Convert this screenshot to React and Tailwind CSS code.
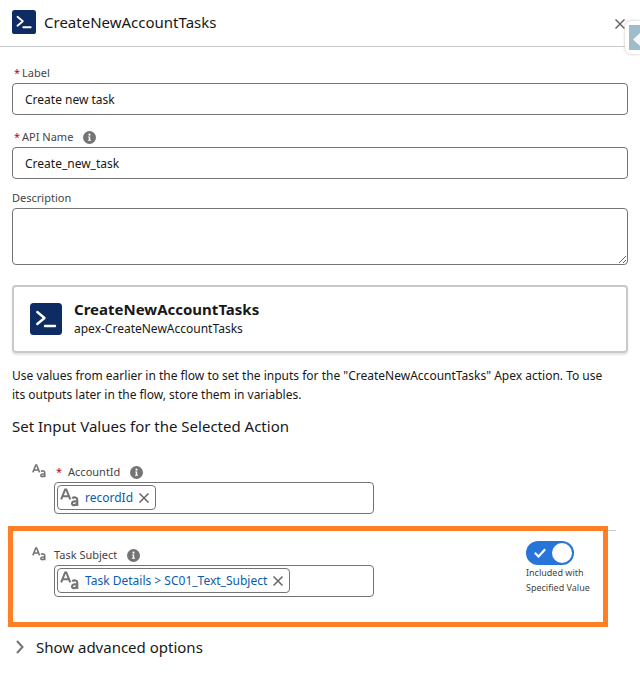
import { useState } from 'react';

function ApexIcon({ className }) {
  return (
    <svg viewBox="0 0 32 32" className={className} aria-hidden="true">
      <rect width="32" height="32" rx="3.500" fill="#0d2c63" />
      <path d="M7.300 9 14.500 15l-7.200 6" fill="none" stroke="#fff" strokeWidth="2.400" strokeLinecap="round" strokeLinejoin="round" />
      <path d="M15 23h10" fill="none" stroke="#fff" strokeWidth="2.400" strokeLinecap="round" />
    </svg>
  );
}

function InfoButton({ label }) {
  return (
    <button type="button" aria-label={label} className="shrink-0">
      <svg viewBox="0 0 13 13" className="size-[13px]" aria-hidden="true">
        <circle cx="6.500" cy="6.500" r="6.500" fill="#747474" />
        <circle cx="6.500" cy="3.700" r="1.100" fill="#fff" />
        <path d="M5.200 5.500h2v3.300h.8v1H5v-1h.8V6.400h-.6z" fill="#fff" />
      </svg>
    </button>
  );
}

function TextTypeIcon({ className }) {
  return (
    <svg viewBox="0 0 20 20" className={className} fill="none" stroke="#747474" strokeWidth="2.200" aria-hidden="true">
      <path d="M1.200 12 5.400 1.500h1.200L10.800 12M2.800 8.600h6.400" />
      <path d="M12.800 10.600c2-1.300 5.400-1 5.400 1.700V19M18.200 13.800c-3.400 0-5.600.5-5.600 2.500 0 2.600 4.500 2.200 5.600-.5" />
    </svg>
  );
}

function CloseIcon({ className }) {
  return (
    <svg viewBox="0 0 10 10" className={className} fill="none" stroke="#666" strokeWidth="1.500" aria-hidden="true">
      <path d="M.5.5l9 9M9.500.5l-9 9" />
    </svg>
  );
}

function Required() {
  return <span className="text-[#ba0517]">*</span>;
}

function Field({ id, label, info, value }) {
  return (
    <div>
      <div className="flex h-5 items-center gap-2.5">
        <label htmlFor={id} className="flex gap-0.5 pl-0.5 text-[#444]">
          <Required />
          {label}
        </label>
        {info && <InfoButton label={`${label} help`} />}
      </div>
      <input
        id={id}
        type="text"
        defaultValue={value}
        className="block h-8 w-full rounded border border-[#747474] px-3 text-xs text-[#181818]"
      />
    </div>
  );
}

function ResourceField({ id, label, required, value }) {
  const [resource, setResource] = useState(value);

  return (
    <div className="flex gap-2">
      <TextTypeIcon className="mt-0.5 size-3.5 shrink-0" />
      <div className="w-80">
        <div className="flex h-5 items-center gap-2.5">
          <label htmlFor={id} className="flex gap-1.5 text-[#444]">
            {required && <span className="pl-0.5"><Required /></span>}
            {label}
          </label>
          <InfoButton label={`${label} help`} />
        </div>
        <div className="flex h-8 items-start rounded border border-[#747474] px-0.5 pt-0.5">
          {resource && (
            <span className="flex h-[25px] shrink-0 items-center gap-1.5 rounded border border-[#747474] pl-0.5 pr-1.5 text-xs text-[#0b5cab]">
              <TextTypeIcon className="size-[19px]" />
              {resource}
              <button type="button" aria-label={`Remove ${resource}`} onClick={() => setResource('')}>
                <CloseIcon className="size-2.5" />
              </button>
            </span>
          )}
          <input id={id} type="text" className="h-[25px] min-w-0 flex-1 px-1 text-xs outline-none" />
        </div>
      </div>
    </div>
  );
}

function IncludeToggle() {
  return (
    <label className="block w-[90px] cursor-pointer text-[9px] leading-[15px] text-[#444]">
      <span className="relative block h-6 w-12">
        <input type="checkbox" role="switch" defaultChecked className="peer sr-only" />
        <span className="flex h-6 items-center justify-between rounded-full bg-[#2874d8] pl-2 pr-0.5 peer-focus-visible:ring-2">
          <svg viewBox="0 0 12 10" className="w-3" fill="none" stroke="#fff" strokeWidth="2.200" aria-hidden="true">
            <path d="M.8 4.800 4.500 8.500 11.200 1.200" />
          </svg>
          <span className="size-5 rounded-full bg-white" />
        </span>
      </span>
      Included with
      <br />
      Specified Value
    </label>
  );
}

export default function App() {
  return (
    <div className="relative overflow-hidden bg-white font-['Noto_Sans','Open_Sans',sans-serif] text-[11px] text-[#181818]">
      <header className="flex h-[47px] items-center gap-2 border-b border-[#c9c9c9] pl-3 pr-[15px] pb-0.5">
        <ApexIcon className="size-6" />
        <h1 className="flex-1 text-[15px]">CreateNewAccountTasks</h1>
        <button type="button" aria-label="Close" className="pt-1">
          <CloseIcon className="size-2.5" />
        </button>
      </header>

      <button
        type="button"
        aria-label="Expand panel"
        className="absolute right-0 top-[21px] rounded-l-md bg-white py-1 pl-1 shadow-[0_0_3px_#bbb]"
      >
        <svg viewBox="0 0 11 25" className="h-[25px] w-[11px]" aria-hidden="true">
          <rect width="11" height="25" fill="#9fbccb" />
          <path d="M4 14.500 11 8v13z" fill="#f7f7f7" />
        </svg>
      </button>

      <main className="px-3 pt-4">
        <div className="flex flex-col gap-3">
          <Field id="label" label="Label" value="Create new task" />
          <Field id="api-name" label="API Name" info value="Create_new_task" />
        </div>
        <div className="mt-[9px]">
          <label htmlFor="description" className="flex h-5 items-center text-[#444]">Description</label>
          <textarea id="description" className="block h-[57px] w-full rounded border border-[#747474] px-3 py-2 text-xs" />
        </div>

        <section className="mt-5 flex items-center gap-3 rounded border-2 border-[#c9c9c9] px-4 py-3 shadow-[0_2px_2px_rgba(0,0,0,0.1)]">
          <ApexIcon className="size-8" />
          <div>
            <h2 className="text-[15px] leading-5 font-bold">CreateNewAccountTasks</h2>
            <p className="text-xs leading-5">apex-CreateNewAccountTasks</p>
          </div>
        </section>

        <p className="mt-[13px] pr-3 text-xs leading-[19px]">
          Use values from earlier in the flow to set the inputs for the "CreateNewAccountTasks" Apex action. To use its
          outputs later in the flow, store them in variables.
        </p>
        <h2 className="mt-2.5 text-[15px] leading-6">Set Input Values for the Selected Action</h2>

        <div className="mr-3 mt-6 pb-4 pl-5">
          <ResourceField id="account-id" label="AccountId" required value="recordId" />
        </div>
        <div className="relative mr-3 flex items-start justify-between border-t border-[#c9c9c9] pb-[38px] pl-5 pt-2.5">
          <div className="pt-1">
            <ResourceField id="task-subject" label="Task Subject" value="Task Details > SC01_Text_Subject" />
          </div>
          <IncludeToggle />
          <div className="pointer-events-none absolute -left-1 -top-[5px] bottom-2 right-2 border-5 border-[#ff7f27]" />
        </div>

        <button type="button" className="flex items-center gap-3 pl-1 text-[15px] leading-6">
          <svg viewBox="0 0 8 14" className="h-3.5 w-2" fill="none" stroke="#747474" strokeWidth="2" aria-hidden="true">
            <path d="M1 1l5.500 6L1 13" />
          </svg>
          Show advanced options
        </button>
      </main>
    </div>
  );
}
